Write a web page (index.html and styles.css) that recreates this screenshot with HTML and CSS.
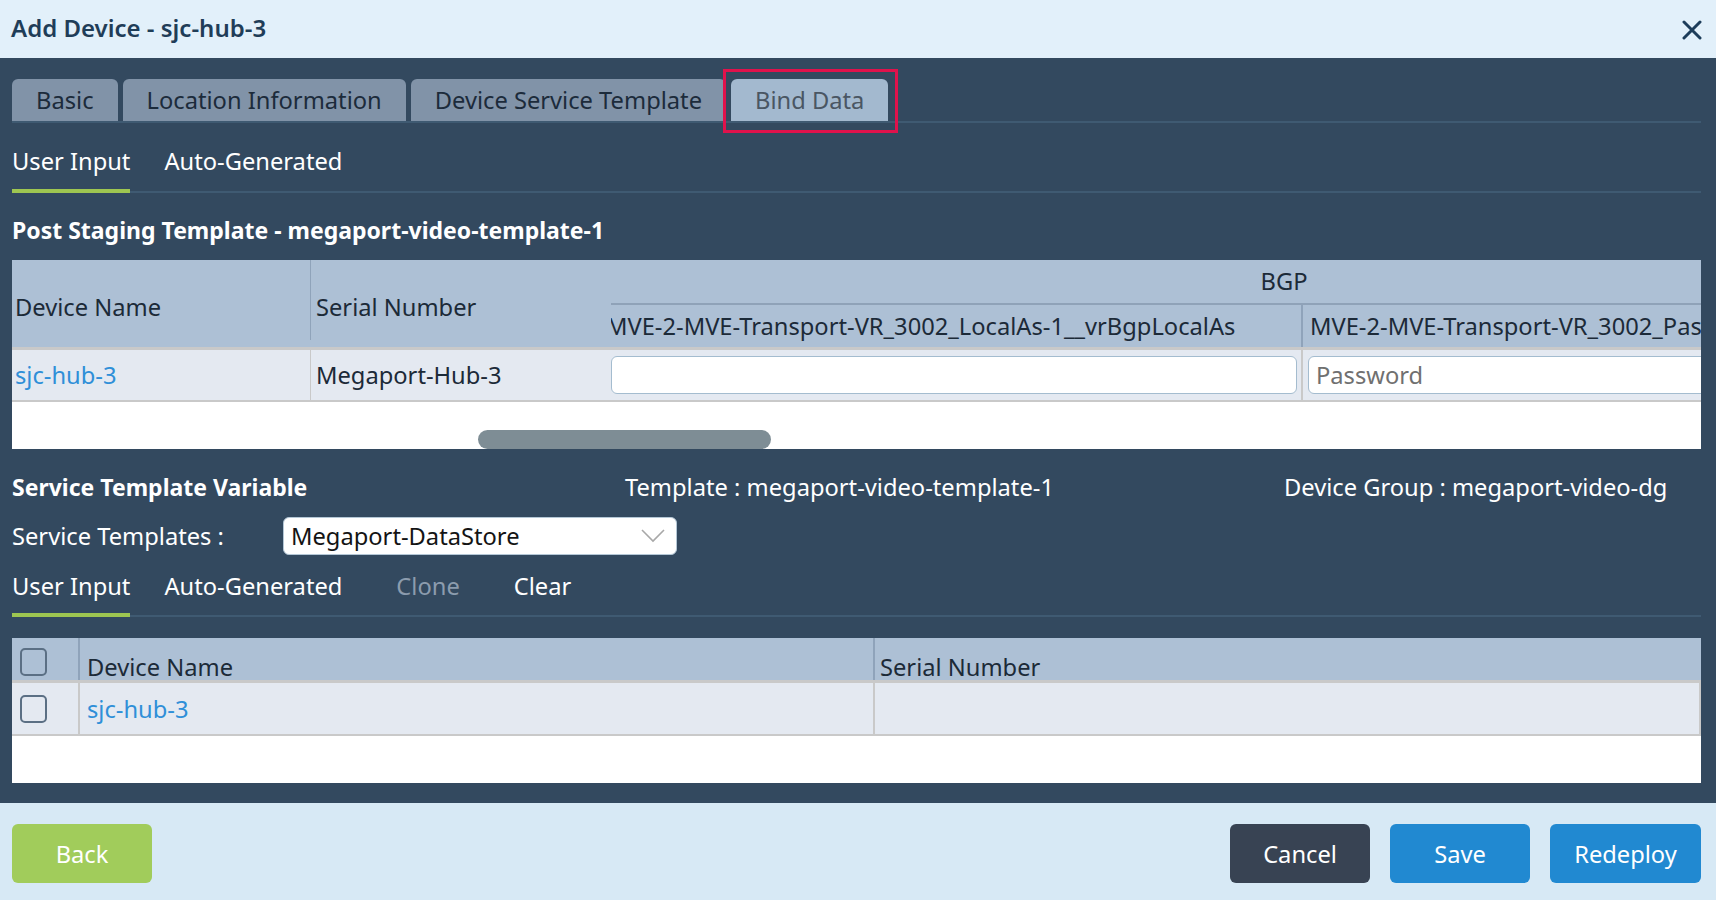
FILE: index.html
```html
<!DOCTYPE html>
<html lang="en">
<head>
    <meta charset="UTF-8">
    <title>Add Device - sjc-hub-3</title>
    <link rel="stylesheet" href="styles.css">
</head>
<body>
    <div class="dialog">
        <header class="dlg-head">
            <h1>Add Device - sjc-hub-3</h1>
            <button class="close" title="Close">
                <svg width="20" height="20" viewBox="0 0 20 20"><path d="M2 2L18 18M18 2L2 18" stroke="#1d3d5a" stroke-width="3" stroke-linecap="round"/></svg>
            </button>
        </header>

        <main class="dlg-body">
            <nav class="tabs">
                <div class="tab">Basic</div>
                <div class="tab">Location Information</div>
                <div class="tab">Device Service Template</div>
                <div class="tab active">Bind Data<span class="focus-ring"></span></div>
            </nav>

            <div class="subtabs first">
                <span class="subtab active">User Input</span>
                <span class="subtab">Auto-Generated</span>
            </div>

            <h2 class="section-title">Post Staging Template - megaport-video-template-1</h2>

            <div class="grid-wrap pst">
                <div class="pst-grid">
                    <div class="hc h-name">Device Name</div>
                    <div class="hc h-serial">Serial Number</div>
                    <div class="hc h-group">BGP</div>
                    <div class="hc h-col c3"><span>MVE-2-MVE-Transport-VR_3002_LocalAs-1__vrBgpLocalAs</span></div>
                    <div class="hc h-col c4">MVE-2-MVE-Transport-VR_3002_Password</div>
                    <div class="bc b-name"><a href="#">sjc-hub-3</a></div>
                    <div class="bc b-serial">Megaport-Hub-3</div>
                    <div class="bc b-in c3"><input type="text" class="txt"></div>
                    <div class="bc b-in c4"><input type="password" class="txt pw" placeholder="Password"></div>
                </div>
                <div class="thumb"></div>
            </div>

            <div class="stv-head">
                <h2 class="section-title">Service Template Variable</h2>
                <span>Template : megaport-video-template-1</span>
                <span>Device Group : megaport-video-dg</span>
            </div>

            <div class="field-row">
                <label>Service Templates :</label>
                <div class="select">
                    <span>Megaport-DataStore</span>
                    <svg width="24" height="14" viewBox="0 0 24 14"><path d="M1 1L12 12L23 1" fill="none" stroke="#a8a8a8" stroke-width="1.6"/></svg>
                </div>
            </div>

            <div class="subtabs second">
                <span class="subtab active">User Input</span>
                <span class="subtab">Auto-Generated</span>
                <span class="subtab action disabled">Clone</span>
                <span class="subtab action">Clear</span>
            </div>

            <div class="grid-wrap stv">
                <div class="stv-grid">
                    <div class="hc h-chk"><span class="chk"></span></div>
                    <div class="hc h-dn">Device Name</div>
                    <div class="hc h-sn">Serial Number</div>
                    <div class="bc r-chk"><span class="chk"></span></div>
                    <div class="bc r-dn"><a href="#">sjc-hub-3</a></div>
                    <div class="bc r-sn"></div>
                </div>
            </div>
        </main>

        <footer class="dlg-foot">
            <button class="btn back">Back</button>
            <div class="right-btns">
                <button class="btn cancel">Cancel</button>
                <button class="btn primary">Save</button>
                <button class="btn primary wide">Redeploy</button>
            </div>
        </footer>
    </div>
</body>
</html>
```

FILE: styles.css
```css
body {
    margin: 0;
    font-family: "Noto Sans", "Open Sans", sans-serif;
    font-size: 23.7px;
}
.dialog {
    display: flex;
    flex-direction: column;
    height: 100vh;
}
.dlg-head {
    height: 58px;
    box-sizing: border-box;
    background-color: #e2f0fa;
    display: flex;
    align-items: center;
    justify-content: space-between;
    padding: 0 14px 4px 11px;
}
.dlg-head h1 {
    margin: 0;
    font-size: 24px;
    font-weight: 600;
    color: #1f3d58;
}
.close {
    border: none;
    background: none;
    padding: 0;
    display: flex;
    margin-top: 6px;
}
.dlg-body {
    background-color: #33495f;
    padding: 21px 15px 20px 12px;
}

/* top tabs */
.tabs {
    display: flex;
    gap: 5px;
    border-bottom: 2px solid #3f5a72;
}
.tab {
    position: relative;
    height: 42px;
    line-height: 42px;
    padding: 0 24px;
    background-color: #8193a8;
    color: #1c2b3b;
    border-radius: 6px 6px 0 0;
}
.tab.active {
    background-color: #a3b9cf;
    color: #4a5663;
}
.focus-ring {
    position: absolute;
    left: -8px;
    right: -10px;
    top: -10px;
    bottom: -12px;
    border: 3px solid #e0124c;
}

/* sub tabs */
.subtabs {
    display: flex;
    border-bottom: 2px solid #3f5a72;
    color: #fff;
}
.subtab {
    line-height: 32px;
    padding-bottom: 12px;
    border-bottom: 4px solid transparent;
    margin-bottom: -2px;
    margin-right: 34px;
}
.subtabs.first .subtab {
    padding-top: 22px;
}
.subtabs.second .subtab {
    padding-top: 15px;
    padding-bottom: 11px;
}
.subtab.active {
    border-bottom-color: #9ec651;
}
.subtab.action {
    margin-left: 20px;
}
.subtab.disabled {
    color: #8c9cae;
}

.section-title {
    margin: 22px 0 0;
    font-size: 23px;
    font-weight: 700;
    line-height: 30px;
    color: #fff;
}

/* grids */
.grid-wrap {
    position: relative;
    background-color: #fff;
    overflow: hidden;
}
.grid-wrap.pst {
    margin-top: 15px;
    height: 189px;
}
.pst-grid {
    display: grid;
    grid-template-columns: 299px 300px 692px 654px;
    grid-template-rows: 45px 42px 55px;
    width: 1945px;
}
.hc {
    background-color: #adc0d5;
    color: #1c2a38;
    white-space: nowrap;
    overflow: hidden;
    box-sizing: border-box;
}
.bc {
    background-color: #e4e9f1;
    border-top: 3px solid #c9c9c9;
    border-bottom: 2px solid #c9c9c9;
    box-sizing: border-box;
    display: flex;
    align-items: center;
    white-space: nowrap;
    overflow: hidden;
    color: #1c2a38;
}
.bc a {
    color: #2f8fd8;
    text-decoration: none;
}
.h-name, .h-serial {
    grid-row: 1 / 3;
    position: relative;
    display: flex;
    align-items: flex-end;
    line-height: 30px;
    padding-bottom: 25px;
}
.h-name {
    padding-left: 3px;
}
.h-name::after {
    content: "";
    position: absolute;
    right: 0;
    top: 0;
    bottom: 7px;
    width: 1px;
    background-color: #8fa3ba;
}
.h-serial {
    padding-left: 5px;
}
.h-group {
    grid-column: 3 / 5;
    text-align: center;
    line-height: 43px;
    border-bottom: 2px solid #8fa2b8;
}
.h-col {
    line-height: 42px;
}
.h-col.c3 {
    border-right: 2px solid #8fa3ba;
}
.h-col.c3 span {
    margin-left: -5px;
}
.h-col.c4 {
    padding-left: 7px;
}
.b-name {
    padding-left: 3px;
    border-right: 1px solid #c9c9c9;
}
.b-serial {
    padding-left: 5px;
}
.b-in.c3 {
    border-right: 2px solid #c9c9c9;
    padding-right: 4px;
}
.b-in.c4 {
    padding-left: 5px;
}
.txt {
    width: 100%;
    height: 38px;
    box-sizing: border-box;
    border: 1px solid #a4bccf;
    border-radius: 6px;
    background: #fff;
    font-family: inherit;
    font-size: 23.7px;
    padding: 0 7px;
    outline: none;
}
.txt.pw::placeholder {
    color: #707070;
}
.thumb {
    position: absolute;
    left: 466px;
    top: 170px;
    width: 293px;
    height: 19px;
    border-radius: 10px;
    background-color: #7e8d95;
}

/* service template variable */
.stv-head {
    display: grid;
    grid-template-columns: 613px 659px auto;
    align-items: center;
    margin-top: 23px;
    color: #fff;
    line-height: 30px;
}
.stv-head .section-title {
    margin: 0;
}
.field-row {
    display: flex;
    align-items: center;
    margin-top: 15px;
    color: #fff;
}
.field-row label {
    width: 271px;
}
.select {
    width: 394px;
    height: 38px;
    box-sizing: border-box;
    background: #fff;
    border: 1px solid #b4c7d6;
    border-radius: 6px;
    display: flex;
    align-items: center;
    justify-content: space-between;
    padding: 0 11px 0 7px;
    color: #141414;
}
.grid-wrap.stv {
    margin-top: 21px;
    height: 145px;
}
.stv-grid {
    display: grid;
    grid-template-columns: 68px 795px 826px;
    grid-template-rows: 42px 56px;
}
.h-dn, .h-sn {
    display: flex;
    align-items: flex-end;
    line-height: 26px;
}
.h-chk, .h-dn {
    border-right: 2px solid #8fa3ba;
}
.h-dn {
    padding-left: 7px;
}
.h-sn {
    padding-left: 5px;
}
.h-chk {
    padding: 10px 0 0 8px;
}
.r-chk {
    padding-left: 8px;
    border-right: 2px solid #c9c9c9;
}
.r-dn {
    padding-left: 7px;
    border-right: 2px solid #c9c9c9;
}
.r-sn {
    border-right: 2px solid #c9c9c9;
}
.chk {
    display: block;
    width: 27px;
    height: 28px;
    box-sizing: border-box;
    border: 2px solid #5b6f84;
    border-radius: 5px;
}

/* footer */
.dlg-foot {
    flex: 1;
    background-color: #d7e9f5;
    display: flex;
    justify-content: space-between;
    align-items: flex-start;
    padding: 21px 15px 0 12px;
}
.right-btns {
    display: flex;
    gap: 20px;
}
.btn {
    width: 140px;
    height: 59px;
    border: none;
    border-radius: 6px;
    color: #fff;
    font-family: inherit;
    font-size: 23.7px;
    cursor: pointer;
}
.btn.back {
    background-color: #a1cc5b;
}
.btn.cancel {
    background-color: #384353;
}
.btn.primary {
    background-color: #2189d1;
}
.btn.wide {
    width: 151px;
}
```
